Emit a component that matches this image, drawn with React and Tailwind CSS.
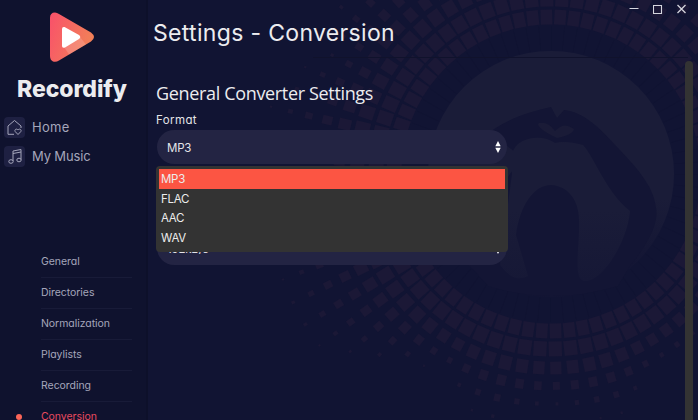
const navLinks = ["General", "Directories", "Normalization", "Playlists", "Recording"];
const formats = ["MP3", "FLAC", "AAC", "WAV"];

const rings = [157, 175, 194, 212, 230, 249, 268, 288, 309];

// how far the dots reach out, every 15 degrees clockwise from the top
const reach = [
  290, 280, 260, 270, 250, 240, 240, 240, 240, 235, 224, 266, 240, 272, 226, 275,
  325, 290, 265, 310, 262, 320, 280, 270,
];

const reachAt = (angle) => {
  const pos = (angle % 360) / 15;
  const i = Math.floor(pos);
  const next = reach[(i + 1) % reach.length];
  return reach[i] + (next - reach[i]) * (pos - i);
};

const dots = rings.flatMap((r, ring) =>
  Array.from({ length: 72 }, (_, i) => {
    const angle = i * 5 + 3.5;
    const end = reachAt(angle);
    const size = ring < 2 ? 15 : Math.min(15, (17 * (end - r)) / (end - 178));
    return { key: `${ring}-${i}`, r, angle, size };
  })
).filter((d) => d.size > 2);

const Backdrop = () => (
  <svg className="absolute inset-0 size-full" viewBox="0 0 550 420" fill="none">
    <defs>
      <linearGradient id="disc" x1="0" y1="0" x2="0" y2="1">
        <stop offset="0.6" stopColor="#1a1c38" />
        <stop offset="0.88" stopColor="#131534" />
      </linearGradient>
      <linearGradient id="body" x1="0" y1="0" x2="0" y2="1">
        <stop offset="0.5" stopColor="#1a1c38" />
        <stop offset="1" stopColor="#161836" />
      </linearGradient>
    </defs>
    <g fill="#1b1836">
      {dots.map((d) => (
        <rect
          key={d.key}
          x={-d.size * 0.42}
          y={-d.size / 2}
          width={d.size * (d.r < 160 ? 0.78 : 0.88)}
          height={d.size}
          transform={`translate(403 174) rotate(${d.angle}) translate(0 ${-d.r})`}
        />
      ))}
    </g>
    <circle cx="403" cy="174" r="136" stroke="#101331" strokeWidth="24" strokeDasharray="0.5 11.37" />
    <circle cx="403" cy="174" r="123" fill="url(#disc)" />
    <path
      d="M322 266C338 232 347 192 365 170C378 157 362 139 330 141C354 120 380 112 403 107L409 118L416 110C435 112 450 126 470 148C485 164 506 185 508 208C512 225 494 252 482 266L470 286Q403 306 340 286Z"
      fill="#131534"
    />
    <path
      d="M364 174C360 148 370 140 386 138Q398 137 407 143Q417 140 435 145C448 160 458 192 482 211C480 240 455 282 437 281C424 281 432 246 431 220C431 200 420 186 403 185C386 185 372 205 368 235L380 276Q366 284 352 265Z"
      fill="url(#body)"
    />
    <path d="M409 138C396 132 387 125 391 123Q400 121 407 131Q416 121 426 129Q425 135 409 138Z" fill="#1a1b37" />
    <path d="M165 57.5H540" stroke="#10122c" />
  </svg>
);

const SortArrows = () => (
  <svg className="h-3.5 w-1.5" viewBox="0 0 6 14" fill="#fff">
    <path d="M3 1L5.7 6.3H.3Z M3 13L.3 7.7H5.7Z" />
  </svg>
);

const Select = ({ value }) => (
  <div className="flex h-[34px] w-[350px] items-center justify-between rounded-full bg-[#232443] pl-[10px] pr-[6px] text-[11.5px] tracking-[-0.2px] text-[#e4e4e8]">
    <span className="pt-[3px]">{value}</span>
    <SortArrows />
  </div>
);

const WindowButtons = () => (
  <div className="absolute right-[11px] top-1 flex items-center gap-[14px] text-[#d5d6de]">
    <svg className="size-[10px]" viewBox="0 0 10 10" stroke="currentColor">
      <path d="M.5 4.500H9.500" />
    </svg>
    <svg className="size-[10px]" viewBox="0 0 10 10" fill="none" stroke="currentColor">
      <path d="M.5 1.500H8.500V9.500H.5Z" strokeWidth="1.1" />
    </svg>
    <svg className="size-[10px]" viewBox="0 0 10 10" stroke="currentColor">
      <path d="M.5 1L8.500 9M8.500 1L.5 9" strokeWidth="1.3" />
    </svg>
  </div>
);

const Sidebar = () => (
  <aside className="flex h-full w-[148px] shrink-0 flex-col border-r-2 border-[#0d102a] bg-[#0f122e]">
    <svg className="ml-[49px] mt-3 h-[51px] w-[46px] shrink-0" viewBox="0 0 46 51">
      <defs>
        <linearGradient id="logo" x1="0" y1="0" x2="1" y2="0.4">
          <stop offset="0" stopColor="#f9506a" />
          <stop offset="1" stopColor="#f28058" />
        </linearGradient>
      </defs>
      <path
        d="M1 6Q1 .5 6 .5Q8 .5 10 2L42 20.5Q48 25 42 29.500L10 48.500Q7 50.500 4 49.500Q1 48 1 44Z"
        fill="url(#logo)"
      />
      <path d="M15 35L31 25L37 32.500L20 42.500Z" fill="#fff" opacity=".16" />
      <path d="M13 17Q13 14.500 15.500 15L30 23Q32.500 25 30 27L16 35.500Q13 36.500 13 34Z" fill="#fff" />
    </svg>
    <h1 className="ml-[17px] mt-[10px] h-8 shrink-0 text-[23px] leading-8 font-extrabold tracking-[-0.08px] text-[#ececef]">
      Recordify
    </h1>

    <div className="ml-1 mt-3 flex shrink-0 flex-col gap-2 text-[13px] text-[#a5a6bb]">
      <div className="flex h-[21px] items-center gap-[7px]">
        <span className="flex size-[21px] items-center justify-center rounded bg-[#1e2042]">
          <svg className="size-[17px]" viewBox="0 0 17 17" fill="none" stroke="currentColor" strokeWidth="1">
            <path d="M8 15.300H2V7L8.500 1.500L15 7V9" />
            <path d="M12 15.500L9.300 12.700C7.900 10.800 10.500 9 12 11C13.500 9 16.100 10.800 14.700 12.700Z" />
          </svg>
        </span>
        <span className="pt-px tracking-[0.3px]">Home</span>
      </div>
      <div className="flex h-[21px] items-center gap-[7px]">
        <span className="flex size-[21px] items-center justify-center rounded bg-[#1e2042]">
          <svg className="size-[17px]" viewBox="0 0 17 17" fill="none" stroke="currentColor" strokeWidth="1">
            <path d="M7 13V3L15 1.500V11.500M7 5.500L15 4" />
            <ellipse cx="5" cy="13.500" rx="2.200" ry="1.800" />
            <ellipse cx="13" cy="12" rx="2.200" ry="1.800" />
          </svg>
        </span>
        <span className="pt-px tracking-[-0.15px]">My Music</span>
      </div>
    </div>

    <nav className="ml-[41px] mt-20 flex w-[91px] shrink-0 flex-col text-[10.5px] tracking-[-0.05px] text-[#a5a6bb]">
      {navLinks.map((link) => (
        <a key={link} className="flex h-[31px] items-center border-b border-[#181b38]">
          {link}
        </a>
      ))}
      <a className="relative flex h-[30px] items-center text-[#e84a5f]">
        <span className="absolute -left-[25px] size-1.5 rounded-full bg-[#fb6558]" />
        Conversion
      </a>
    </nav>
  </aside>
);

export default function App() {
  return (
    <div className="flex h-[420px] w-[698px] overflow-hidden bg-[#111433] font-['Inter',sans-serif] [font-feature-settings:'cv11']">
      <Sidebar />
      <main className="relative flex-1 overflow-hidden">
        <Backdrop />
        <WindowButtons />
        <div className="absolute right-[5px] top-[61px] h-[380px] w-2 rounded-t bg-[#333333]" />

        <div className="relative pl-[5px] pt-[17px]">
          <h2 className="h-8 text-[23px] leading-8 tracking-[0.33px] text-[#ececef]">Settings - Conversion</h2>
          <div className="pl-[3px]">
            <h3 className="mt-8 h-6 font-['Open_Sans',sans-serif] text-[18px] leading-6 tracking-[-0.34px] text-[#ececef]">
              General Converter Settings
            </h3>
            <label className="mt-[7px] block h-4 text-[11.5px] leading-4 tracking-[0.4px] text-[#e4e4e8]">Format</label>
            <div className="relative mt-0.5 ml-px flex flex-col gap-[67px]">
              <Select value="MP3" />
              <Select value="192kB/s" />
              <ul className="absolute -left-px top-9 h-[86px] w-[352px] rounded-sm bg-[#333333] px-[3px] pt-[3px] text-[11.5px] tracking-[-0.3px] text-[#ececec]">
                {formats.map((format) => (
                  <li
                    key={format}
                    className={`flex h-[19.8px] items-center pl-0.5 pt-px ${format === "MP3" ? "bg-[#fc5543]" : ""}`}
                  >
                    {format}
                  </li>
                ))}
              </ul>
            </div>
          </div>
        </div>
      </main>
    </div>
  );
}
